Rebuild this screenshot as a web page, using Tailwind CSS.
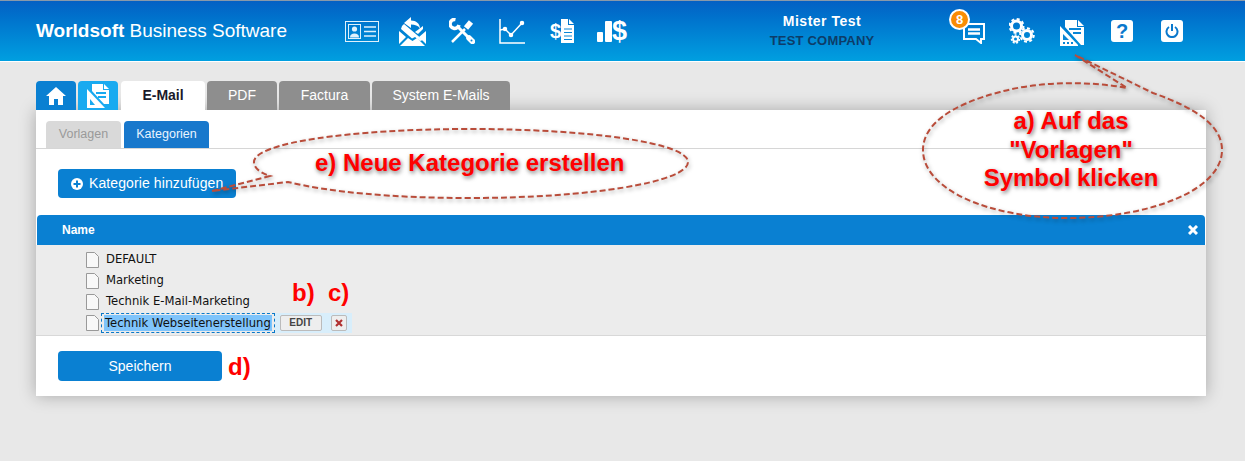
<!DOCTYPE html>
<html lang="de">
<head>
<meta charset="UTF-8">
<title>Worldsoft Business Software</title>
<script src="https://cdn.jsdelivr.net/npm/@tailwindcss/browser@4"></script>
</head>
<body class="relative w-[1245px] h-[461px] overflow-hidden bg-[#e8e8e8] font-['Liberation_Sans',Arial,sans-serif]">

<!-- header -->
<header class="h-[62px] flex items-center border-t border-b border-t-[#8a99aa] border-b-white bg-gradient-to-b from-[#0560c4] to-[#009fe0] text-white">
    <div class="w-[337px] pl-[36px] text-[19px] whitespace-nowrap"><b>Worldsoft</b> Business Software</div>
    <nav class="flex w-[300px]">
        <span class="w-[50px] h-[40px] flex items-center justify-center">
            <svg width="34" height="21" viewBox="0 0 34 21" fill="none" stroke="#dff1fc"><rect x=".5" y=".5" width="33" height="20"/><rect x="3.5" y="3.5" width="12" height="14"/><circle cx="9.5" cy="8" r="2.6" fill="#dff1fc" stroke="none"/><path d="M5 16.500c0-3 2-4 4.500-4s4.500 1 4.500 4z" fill="#dff1fc" stroke="none"/><path d="M19 6h12M19 10.500h12M19 15h12" stroke-width="1.500"/></svg>
        </span>
        <span class="w-[50px] h-[40px] flex items-center justify-center">
            <svg width="27" height="29" viewBox="0 0 27 29" fill="white"><path d="M0 14l7 6-7 7zM27 14l-7 6 7 7zM1 29l8-8 4.500 3 4.500-3 8 8z"/><path d="M3 9l2-2 19 16-3 1-5-4-3 1.500L2 12z"/><path d="M24 9v3l-5 5-3-2z"/><path d="M5 6l7-6v3.500c5 0 9 3 9 8-2-3-5-4-9-4V11z"/></svg>
        </span>
        <span class="w-[50px] h-[40px] flex items-center justify-center">
            <svg width="26" height="26" viewBox="0 0 26 26" fill="none" stroke="white"><path d="M6.500 1.500A4.500 4.500 0 1 0 10 7" stroke-width="3.500"/><path d="M9 9l14 14" stroke-width="3"/><path d="M20 20l3.500 3.500" stroke-width="5.500" stroke-linecap="round"/><path d="M22 4L17 10" stroke-width="5.500"/><path d="M16 11L3 24" stroke-width="2.500"/><circle cx="22.500" cy="22.500" r="1" fill="#0a86d6" stroke="none"/></svg>
        </span>
        <span class="w-[50px] h-[40px] flex items-center justify-center">
            <svg width="26" height="25" viewBox="0 0 26 25" fill="none" stroke="white" stroke-width="1.500"><path d="M1 0v24h25"/><path d="M1 11l5-1 6 6 11-12"/><circle cx="6" cy="10" r="1.500" fill="white"/><circle cx="12" cy="16" r="1.500" fill="white"/><circle cx="23" cy="4" r="1.500" fill="white"/></svg>
        </span>
        <span class="w-[50px] h-[40px] flex items-center justify-center gap-[0px]">
            <span class="font-bold text-[20px] leading-none">$</span>
            <svg width="13" height="24" viewBox="0 0 13 24" fill="white"><path d="M0 0h7v6h6v18H0z"/><path d="M8 0l5 5H8z"/><path d="M3 10h8M3 13.500h8M3 17h8M3 20.500h8" stroke="#0a86d6" stroke-width="1"/></svg>
        </span>
        <span class="w-[50px] h-[40px] flex items-center justify-center">
            <svg width="15" height="21" viewBox="0 0 15 21" fill="white"><rect y="11" width="6" height="10" rx="1"/><rect x="8" width="7" height="21" rx="1"/></svg>
            <span class="font-bold text-[27px] leading-none">$</span>
        </span>
    </nav>
    <div class="w-[310px] pl-[60px] text-center">
        <p class="text-[14px] font-bold leading-[20px] tracking-[0.5px] whitespace-nowrap">Mister Test</p>
        <p class="text-[13px] font-bold leading-[20px] text-[#0d3c68] tracking-[0.2px] whitespace-nowrap">TEST COMPANY</p>
    </div>
    <nav class="flex">
        <span class="relative w-[50px] h-[40px] flex items-center justify-center">
            <svg class="ml-[4px] mt-[4px]" width="22" height="22" viewBox="0 0 22 22" fill="none" stroke="white" stroke-width="2"><path d="M1 2h20v15h-3v4l-5-4H1z"/><path d="M5 7.500h12M5 11.500h12" stroke-width="2.500"/></svg>
            <span class="absolute left-[2px] top-[-2px] w-[21px] h-[21px] rounded-full bg-[#f98c05] border-[2px] border-white text-[13px] font-bold leading-[17px] text-center">8</span>
        </span>
        <span class="w-[50px] h-[40px] flex items-center justify-center">
            <svg width="26" height="26" viewBox="0 0 26 26" fill="white">
                <circle cx="7.500" cy="8" r="5" fill="none" stroke="white" stroke-width="3"/><circle cx="7.500" cy="8" r="7" fill="none" stroke="white" stroke-width="2" stroke-dasharray="3 2.500"/>
                <circle cx="18" cy="17" r="4.500" fill="none" stroke="white" stroke-width="3"/><circle cx="18" cy="17" r="6.800" fill="none" stroke="white" stroke-width="2" stroke-dasharray="3 2.300"/>
                <circle cx="6.500" cy="21" r="2.500" fill="none" stroke="white" stroke-width="2"/><circle cx="6.500" cy="21" r="4" fill="none" stroke="white" stroke-width="1.500" stroke-dasharray="2 1.500"/>
            </svg>
        </span>
        <span class="w-[50px] h-[40px] flex items-center justify-center">
            <svg class="mt-[3px]" width="24" height="26" viewBox="0 0 24 26" fill="white"><path d="M5 0h12v7h7v18h-3L5 7z"/><path d="M18 0l6 6h-6z"/><path d="M0 6l18 19v1H0z"/><path d="M9 9h12M13 13h8" stroke="#0a86d6" stroke-width="2"/><path d="M3 14l6 6H3z" fill="#0a86d6"/><path d="M3 22h2v2H3zM7 22h2v2H7zM11 22h2v2h-2z" fill="#0a86d6"/></svg>
        </span>
        <span class="w-[50px] h-[40px] flex items-center justify-center">
            <span class="w-[22px] h-[22px] rounded-[3px] bg-white text-[#0a78cc] text-[20px] font-bold leading-[22px] text-center">?</span>
        </span>
        <span class="w-[50px] h-[40px] flex items-center justify-center">
            <span class="w-[22px] h-[22px] rounded-[3px] bg-white flex items-center justify-center">
                <svg width="14" height="14" viewBox="0 0 14 14" fill="none" stroke="#0a78cc" stroke-width="2"><path d="M4 3a5.500 5.500 0 1 0 6 0"/><path d="M7 0v7"/></svg>
            </span>
        </span>
    </nav>
</header>

<main class="ml-[36px] w-[1170px] mt-[19px]">
    <!-- main tabs -->
    <div class="flex h-[29px] text-[14px] text-white">
        <span class="w-[40px] rounded-t-[4px] bg-[#0a80d2] flex items-center justify-center">
            <svg width="20" height="18" viewBox="0 0 20 18" fill="white"><path d="M10 0l10 9h-3v9h-5v-6H8v6H3V9H0z"/></svg>
        </span>
        <span class="w-[40px] ml-[2px] rounded-t-[4px] bg-[#19aaf0] flex items-center justify-center">
            <svg width="26" height="26" viewBox="0 0 26 26" fill="white"><path d="M7 1h11v6h6v14h-5L7 8z"/><path d="M19 1l5 5h-5z"/><path d="M2 6l18 19H2z"/><path d="M11 10h10M13 14h8" stroke="#19aaf0" stroke-width="2"/><path d="M5 16l5 6H5z" fill="#19aaf0"/></svg>
        </span>
        <span class="w-[84px] ml-[3px] rounded-t-[4px] bg-white text-[#1a1a2a] font-bold flex items-center justify-center">E-Mail</span>
        <span class="w-[70px] ml-[2px] rounded-t-[4px] bg-[#8e8e8e] flex items-center justify-center">PDF</span>
        <span class="w-[91px] ml-[2px] rounded-t-[4px] bg-[#8e8e8e] flex items-center justify-center">Factura</span>
        <span class="w-[138px] ml-[2px] rounded-t-[4px] bg-[#8e8e8e] flex items-center justify-center">System E-Mails</span>
    </div>

    <!-- card -->
    <section class="h-[286px] bg-white shadow-[0_0_16px_rgba(0,0,0,0.28)]">
        <div class="h-[39px] pt-[11px] pl-[10px] flex gap-[3px] border-b border-[#d6d6d6] text-[12.5px]">
            <span class="w-[75px] h-[27px] rounded-t-[4px] bg-[#d9d9d9] text-[#999] flex items-center justify-center">Vorlagen</span>
            <span class="w-[85px] h-[27px] rounded-t-[4px] bg-[#1878cc] text-[#e8f4ff] flex items-center justify-center">Kategorien</span>
        </div>
        <div class="pl-[22px] pt-[20px] h-[66px]">
            <button class="w-[178px] h-[29px] rounded-[4px] bg-[#0a80d2] text-white text-[14px] tracking-[0.1px] flex items-center pl-[13px] gap-[6px]">
                <svg width="12" height="12" viewBox="0 0 12 12"><circle cx="6" cy="6" r="6" fill="white"/><path d="M6 2.500v7M2.500 6h7" stroke="#0a80d2" stroke-width="2"/></svg>
                Kategorie hinzufügen
            </button>
        </div>
        <div class="relative ml-[1px] w-[1168px] h-[30px] rounded-t-[4px] bg-[#0a80d2] text-white text-[12px] font-bold flex items-center pl-[25px]">
            Name
            <svg class="absolute right-[7px] top-[10px]" width="10" height="10" viewBox="0 0 10 10" stroke="white" stroke-width="3"><path d="M1 1l8 8M9 1l-8 8"/></svg>
        </div>
        <ul class="h-[91px] pt-[4px] pl-[50px] bg-[#ececec] border-b border-[#d8d8d8] font-['DejaVu_Sans',sans-serif] text-[11.6px] text-[#111]">
            <li class="h-[21px] flex items-center gap-[7px]">
                <svg width="13" height="16" viewBox="0 0 13 16" fill="#f8f8f8" stroke="#999"><path d="M.5.500h8l4 4v11H.5z"/></svg>
                <span class="mt-[1px]">DEFAULT</span>
            </li>
            <li class="h-[21px] flex items-center gap-[7px]">
                <svg width="13" height="16" viewBox="0 0 13 16" fill="#f8f8f8" stroke="#999"><path d="M.5.500h8l4 4v11H.5z"/></svg>
                <span class="mt-[1px]">Marketing</span>
            </li>
            <li class="h-[21px] flex items-center gap-[7px]">
                <svg width="13" height="16" viewBox="0 0 13 16" fill="#f8f8f8" stroke="#999"><path d="M.5.500h8l4 4v11H.5z"/></svg>
                <span class="mt-[1px]">Technik E-Mail-Marketing</span>
            </li>
            <li class="h-[21px] flex items-center">
                <svg width="13" height="16" viewBox="0 0 13 16" fill="#f8f8f8" stroke="#999"><path d="M.5.500h8l4 4v11H.5z"/></svg>
                <span class="ml-[2px] h-[20px] px-[2px] border border-dashed border-[#0a78c8] flex items-center whitespace-nowrap"><span class="bg-[#7fc4fb] px-[1px] leading-[16px]">Technik Webseitenerstellung</span></span>
                <span class="h-[20px] w-[77px] bg-[#d8eefb] flex items-center pl-[5px] gap-[9px]">
                    <span class="w-[42px] h-[16px] rounded-[2px] bg-[#eee] border border-[#bbb] text-[#444] text-[10px] font-bold font-['Liberation_Sans',sans-serif] flex items-center justify-center">EDIT</span>
                    <span class="w-[16px] h-[16px] rounded-[2px] bg-[#eee] border border-[#bbb] flex items-center justify-center">
                        <svg width="8" height="8" viewBox="0 0 8 8" stroke="#b03030" stroke-width="2.200"><path d="M1 1l6 6M7 1l-6 6"/></svg>
                    </span>
                </span>
            </li>
        </ul>
        <div class="pl-[22px] pt-[15px]">
            <button class="w-[164px] h-[30px] rounded-[4px] bg-[#0a80d2] text-white text-[14px]">Speichern</button>
        </div>
    </section>
</main>

<!-- annotations drawn on top of the screenshot -->
<svg class="absolute left-0 top-0 pointer-events-none" width="1245" height="461" viewBox="0 0 1245 461" fill="none" stroke="#b94c3a" stroke-width="2" stroke-dasharray="6 3" style="filter:drop-shadow(1px 2px 2px rgba(0,0,0,.35))">
    <path d="M1075 55L1127 88C1090 81 1040 81 1000 92C950 105 923 125 923 150C923 190 990 218 1067 218C1150 218 1222 190 1222 150C1222 125 1195 108 1153 93L1075 55"/>
    <path d="M212 191L270 176C258 172 254 167 254 162C254 143 350 129 470 129C590 129 688 143 688 162C688 182 590 198 470 198C390 198 330 192 288 182L212 191"/>
</svg>
<div class="absolute left-[921px] top-[107px] w-[300px] text-center text-[24px] font-bold leading-[28.5px] text-[#ff0000] [text-shadow:1px_2px_4px_rgba(0,0,0,0.55)]">a) Auf das<br>"Vorlagen"<br>Symbol klicken</div>
<div class="absolute left-[315px] top-[149px] whitespace-nowrap text-[24px] font-bold leading-[28px] text-[#ff0000] [text-shadow:1px_2px_4px_rgba(0,0,0,0.55)]">e) Neue Kategorie erstellen</div>
<div class="absolute left-[292px] top-[279px] text-[24px] font-bold leading-[28px] text-[#ff0000]">b)</div>
<div class="absolute left-[328px] top-[279px] text-[24px] font-bold leading-[28px] text-[#ff0000]">c)</div>
<div class="absolute left-[228px] top-[353px] text-[24px] font-bold leading-[28px] text-[#ff0000]">d)</div>
</body>
</html>
